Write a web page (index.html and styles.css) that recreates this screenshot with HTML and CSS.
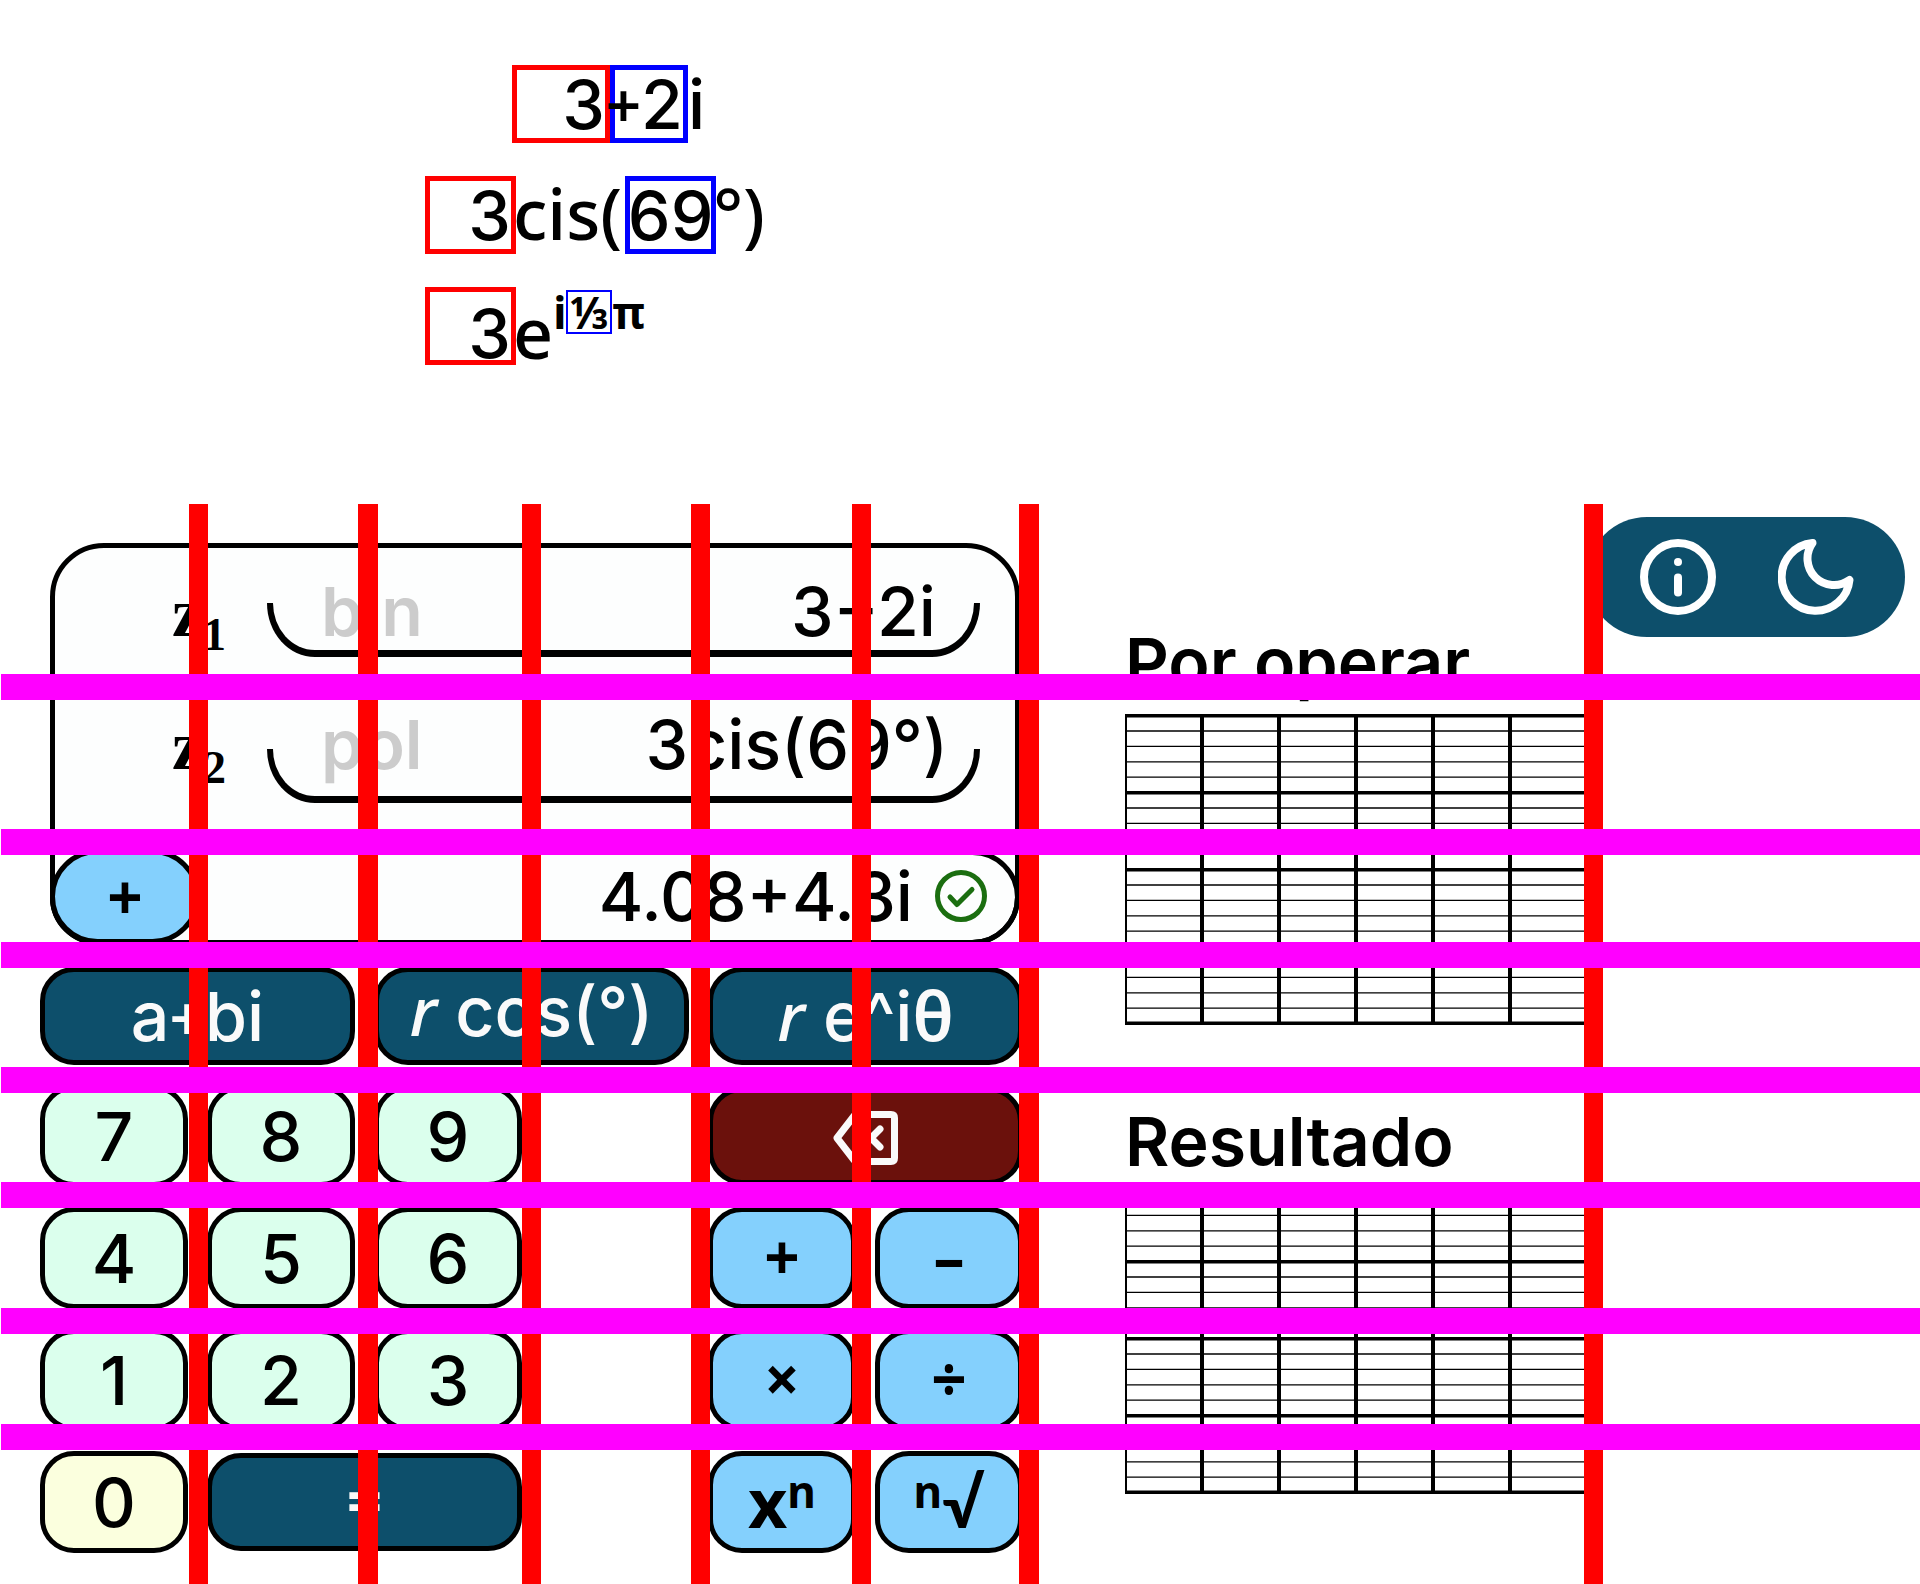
FILE: index.html
```html
<!DOCTYPE html>
<html lang="es">
<head>
<meta charset="utf-8">
<title>Calculadora de números complejos</title>
<meta name="viewport" content="width=device-width, initial-scale=1">
<link rel="stylesheet" href="styles.css">
</head>
<body>
<section class="formats">
  <p class="format format--bin"><span class="slot slot--real">3</span><span class="slot slot--imag"><span class="op">+</span>2</span><span>i</span></p>
  <p class="format"><span class="slot slot--mod">3</span><span class="fixed">cis(</span><span class="slot slot--arg">69</span><span class="fixed">°)</span></p>
  <p class="format"><span class="slot slot--mod slot--low">3</span><span class="fixed fixed--low">e</span><span class="exponent">i<span class="fraction">⅓</span>π</span></p>
</section>

<main class="board">
  <section class="calculator">
    <div class="display">
      <div class="line">
        <label class="name" for="z1">z<sub>1</sub></label>
        <div class="field"><span class="mode">bin</span><input class="value" id="z1" type="text" value="3+2i"></div>
      </div>
      <div class="line line--tall">
        <label class="name" for="z2">z<sub>2</sub></label>
        <div class="field"><span class="mode">pol</span><input class="value" id="z2" type="text" value="3cis(69°)"></div>
      </div>
      <div class="result">
        <button class="current" type="button">+</button>
        <output class="answer" for="z1 z2">4.08+4.3i</output>
        <svg class="check" viewBox="0 0 52 52" aria-hidden="true"><circle cx="26" cy="26" r="23.500"/><path d="M15 27l7 7.500L37 19.500"/></svg>
      </div>
    </div>

    <div class="pad">
      <button class="key key--form" type="button"><span>a<span class="op">+</span>bi</span></button>
      <button class="key key--form key--cos" type="button"><span><i>r</i> cos(°)</span></button>
      <button class="key key--form" type="button"><span><i>r</i> e^i<span class="greek">θ</span></span></button>

      <button class="key" type="button">7</button>
      <button class="key" type="button">8</button>
      <button class="key" type="button">9</button>
      <button class="key key--delete" type="button" aria-label="Borrar"><svg class="backspace" viewBox="0 0 65 54" aria-hidden="true"><path d="M4 27L21 5q1-1.500 3-1.500h34q3.500 0 3.500 3.500v40q0 3.500-3.500 3.500H24q-2 0-3-1.500z"/><path d="M29 18l18 18M47 18L29 36"/></svg></button>

      <button class="key" type="button">4</button>
      <button class="key" type="button">5</button>
      <button class="key" type="button">6</button>
      <button class="key key--op key--first" type="button">+</button>
      <button class="key key--op" type="button">–</button>

      <button class="key" type="button">1</button>
      <button class="key" type="button">2</button>
      <button class="key" type="button">3</button>
      <button class="key key--op key--first" type="button">×</button>
      <button class="key key--op" type="button">÷</button>

      <button class="key key--zero" type="button">0</button>
      <button class="key key--equals" type="button">=</button>
      <button class="key key--power key--first" type="button"><span>x<sup>n</sup></span></button>
      <button class="key key--power" type="button"><span><sup>n</sup><span class="root">√</span></span></button>
    </div>
  </section>

  <section class="plots">
    <h2 class="title">Por operar</h2>
    <svg class="plot" viewBox="0 0 462 311" aria-hidden="true">
      <defs>
        <pattern id="cells" width="77" height="77" patternUnits="userSpaceOnUse">
          <path class="fine" d="M0 17h77M0 32.400h77M0 47.800h77M0 63.200h77"/>
          <path class="bold" d="M0 1.500h77M77 0v77M0 0v77"/>
        </pattern>
      </defs>
      <rect width="462" height="310" fill="url(#cells)"/>
      <path class="bold" d="M0 309.500h462"/>
    </svg>
    <h2 class="title title--second">Resultado</h2>
    <svg class="plot" viewBox="0 0 462 311" aria-hidden="true">
      <rect width="462" height="310" fill="url(#cells)"/>
      <path class="bold" d="M0 309.500h462"/>
    </svg>
  </section>

  <nav class="toolbar">
    <button class="tool" type="button" aria-label="Información"><svg viewBox="0 0 76 76" aria-hidden="true"><circle cx="38" cy="38" r="34"/><path d="M38 38.500v15"/><circle class="dot" cx="38" cy="23" r="4"/></svg></button>
    <button class="tool" type="button" aria-label="Modo oscuro"><svg viewBox="0 0 76 76" aria-hidden="true"><path d="M34.500 4A26.500 26.500 0 0 0 71.500 41A34 34 0 1 1 34.500 4z"/></svg></button>
  </nav>

  <div class="guides guides--columns" aria-hidden="true"><i></i><i></i><i></i><i></i><i></i><i></i><i></i></div>
  <div class="guides guides--rows" aria-hidden="true"><i></i><i></i><i></i><i></i><i></i><i></i><i></i></div>
</main>
</body>
</html>
```
FILE: styles.css
```css
*, *::after { box-sizing: border-box; }

body {
  margin: 0;
  background: #fff;
  color: #000;
  font: 500 68px/78px Inter, "Noto Sans", sans-serif;
}

button, input {
  margin: 0;
  padding: 0;
  font: inherit;
  color: inherit;
}

p, h2 { margin: 0; }

.op { font: 600 62px/70px "Noto Sans", sans-serif; }

/* Number formats */
.formats {
  display: flex;
  flex-direction: column;
  gap: 33px;
  padding: 65px 0 139px 425px;
}

.format {
  display: flex;
  height: 78px;
  white-space: nowrap;
}

.format--bin { padding-left: 87px; }

.slot {
  display: flex;
  align-items: center;
  justify-content: flex-end;
  width: 91px;
  border: 5px solid #00f;
}

.slot--real { width: 98px; border-color: #f00; }
.slot--imag { width: 78px; }
.slot--mod { border-color: #f00; }
.slot--arg { justify-content: center; }
.slot--low { padding-top: 14px; }

.fixed {
  margin: 0 3px 0 -3px;
  font: 500 70px/74px "Noto Sans", sans-serif;
}

.fixed--low { margin-right: 0; padding-top: 8px; }

.exponent {
  display: flex;
  align-items: center;
  height: 50px;
  font: 700 44px/44px "Noto Sans", sans-serif;
}

.fraction {
  display: flex;
  align-items: center;
  justify-content: center;
  width: 46px;
  height: 44px;
  border: 2px solid #00f;
}

/* Board */
.board {
  position: relative;
  display: grid;
  grid-template-columns: minmax(0, 983fr) minmax(0, 102fr) minmax(0, 462fr) 318px;
  align-items: start;
  padding: 0 15px 31px 40px;
}

.calculator {
  display: flex;
  flex-direction: column;
  gap: 22px;
  padding-top: 39px;
}

.display {
  margin: 0 3px 0 10px;
  padding-top: 19px;
  border: 5px solid #000;
  border-radius: 54px 54px 48px 48px;
  background: #fdfefe;
}

.line {
  display: flex;
  height: 90px;
  margin: 0 35px 43px 117px;
}

.line--tall { height: 103px; margin-bottom: 47px; }

.name {
  width: 95px;
  font: bold 70px/92px "Liberation Serif", serif;
}

.name sub {
  font-size: 46px;
  line-height: 0;
  vertical-align: -14px;
}

.field {
  position: relative;
  display: flex;
  flex: 1;
  min-width: 0;
  padding: 0 44px 0 54px;
  line-height: 88px;
}

.line--tall .field { padding-right: 32px; }

.field::after {
  content: "";
  position: absolute;
  inset: auto 0 0;
  height: 54px;
  border: solid #000;
  border-width: 0 6px 7px;
  border-radius: 0 0 48px 48px / 0 0 54px 54px;
  pointer-events: none;
}

.mode { color: #ccc; font-weight: 600; }

.value {
  flex: 1;
  min-width: 0;
  height: 88px;
  border: 0;
  outline: 0;
  background: none;
  text-align: right;
}

.result {
  display: flex;
  align-items: center;
  height: 95px;
  margin: 0 -5px -5px;
  padding: 0 28px 3px 0;
  border: 5px solid #000;
  border-radius: 48px;
}

.current {
  width: 150px;
  height: 95px;
  margin-left: -5px;
  border: 5px solid #000;
  border-radius: 48px;
  background: #84d0fd;
  font: 700 62px/78px "Noto Sans", sans-serif;
}

.answer { flex: 1; text-align: right; }

.check {
  width: 52px;
  height: 52px;
  margin-left: 22px;
  fill: none;
  stroke: #1b6e10;
  stroke-width: 5;
  stroke-linecap: round;
  stroke-linejoin: round;
}

/* Keys */
.pad {
  display: grid;
  grid-template-columns: repeat(6, minmax(0, 1fr));
  grid-template-rows: 98px repeat(4, 102px);
  align-items: center;
  gap: 20px 19px;
}

.key {
  height: 102px;
  border: 5px solid #000;
  border-radius: 34px;
  background: #dbffed;
  white-space: nowrap;
}

.key--first { grid-column-start: 5; }
.key--zero { background: #fbffde; }
.key--op, .key--power { background: #84d0fd; }

.key--op, .key--equals {
  padding-bottom: 4px;
  font: 700 62px/78px "Noto Sans", sans-serif;
}

.key--form, .key--equals, .key--delete {
  grid-column-end: span 2;
  height: 98px;
  background: #0d4f6b;
  color: #fafafa;
}

.key--form .op { line-height: 0; }
.key--cos { padding-bottom: 16px; }
.key--form i, .greek { font-family: "Noto Sans", sans-serif; line-height: 0; }
.greek { font-weight: 600; }

.key--delete { grid-column: 5 / 7; padding-top: 4px; background: #6b110c; }

.backspace {
  display: block;
  width: 65px;
  height: 54px;
  margin: auto;
  fill: none;
  stroke: #fafafa;
  stroke-width: 7;
  stroke-linecap: round;
  stroke-linejoin: round;
}

.key--power { font-family: "Noto Sans", sans-serif; font-weight: 700; }
.key--power sup { font-size: 44px; line-height: 0; vertical-align: 20px; }
.root { font-family: Lato, sans-serif; }

/* Plots */
.plots { grid-column: 3; padding-top: 119px; }

.title {
  margin-bottom: 13px;
  font: inherit;
  font-weight: 600;
  white-space: nowrap;
}

.title--second { margin: 77px 0 3px; }
.plot { display: block; width: 100%; }
.fine { fill: none; stroke: #000; stroke-width: 1.3; }
.bold { fill: none; stroke: #000; stroke-width: 4; }

/* Toolbar */
.toolbar {
  display: flex;
  justify-content: space-between;
  align-items: center;
  height: 120px;
  margin-top: 13px;
  padding: 0 51px 0 53px;
  border-radius: 60px;
  background: #0d4f6b;
}

.tool { border: 0; background: none; }

.tool svg {
  display: block;
  width: 76px;
  height: 76px;
  fill: none;
  stroke: #fff;
  stroke-width: 8;
  stroke-linecap: round;
  stroke-linejoin: round;
}

.tool .dot { fill: #fff; stroke: none; }

/* Guides laid over the board */
.guides {
  position: absolute;
  inset: 0;
  display: grid;
  pointer-events: none;
}

.guides--columns {
  grid-template-columns: 189fr 19px 150fr 20px 144fr 19px 150fr 19px 142fr 19px 148fr 20px 545fr 19px 317fr;
}

.guides--rows {
  grid-template-rows: 170px 26px 129px 26px 87px 26px 99px 26px 89px 26px 100px 26px 90px 26px;
  padding-left: 1px;
}

.guides--columns i { background: #f00; }
.guides--rows i { background: #f0f; }
.guides--columns i:nth-child(1) { grid-column: 2; }
.guides--columns i:nth-child(2) { grid-column: 4; }
.guides--columns i:nth-child(3) { grid-column: 6; }
.guides--columns i:nth-child(4) { grid-column: 8; }
.guides--columns i:nth-child(5) { grid-column: 10; }
.guides--columns i:nth-child(6) { grid-column: 12; }
.guides--columns i:nth-child(7) { grid-column: 14; }
.guides--rows i:nth-child(1) { grid-row: 2; }
.guides--rows i:nth-child(2) { grid-row: 4; }
.guides--rows i:nth-child(3) { grid-row: 6; }
.guides--rows i:nth-child(4) { grid-row: 8; }
.guides--rows i:nth-child(5) { grid-row: 10; }
.guides--rows i:nth-child(6) { grid-row: 12; }
.guides--rows i:nth-child(7) { grid-row: 14; }
```
